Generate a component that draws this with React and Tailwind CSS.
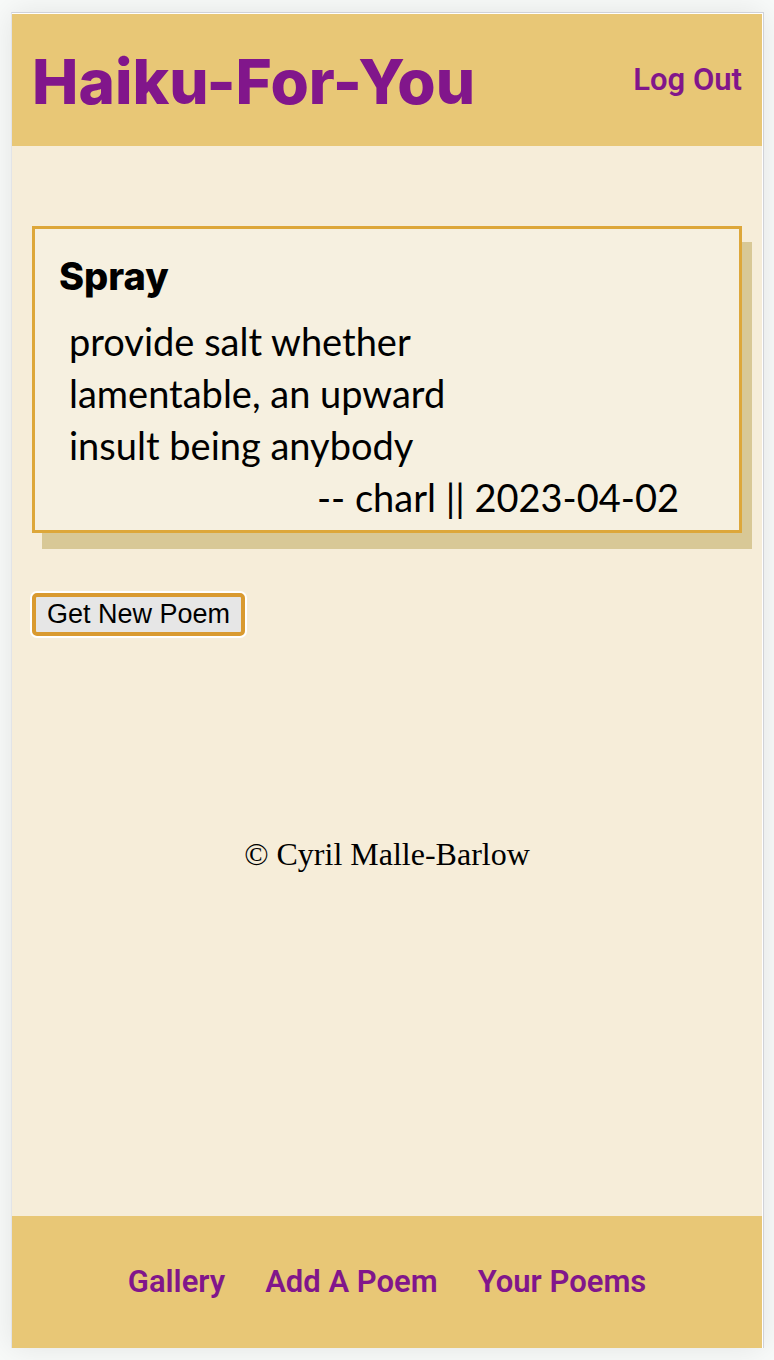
const link = "font-['Roboto',sans-serif] text-[31px] leading-9 font-semibold text-[#81168b] whitespace-nowrap";

export default function App() {
  return (
    <div className="flex min-h-screen flex-col bg-[#f8faf9] pt-3 pr-[10px] pb-3 pl-[11px]">
      <div className="flex grow flex-col border-t border-r border-l border-t-[#d0d2d8] border-r-[#d0d2d8] border-l-[#e2e4e8] bg-white pt-px pr-px shadow-[0_0_30px_rgba(0,20,20,0.09)]">
        <header className="flex h-[132px] items-center justify-between bg-[#e8c776] px-5">
          <h1 className="pt-[3px] font-['Inter',sans-serif] text-[62px] leading-none font-extrabold whitespace-nowrap text-[#81168b]">Haiku-For-You</h1>
          <a href="#logout" className={link}>Log Out</a>
        </header>
        <main className="flex grow flex-col items-start bg-[#f6edd9] px-5 pt-20">
          <article className="w-full border-3 border-[#dda73a] bg-[#f6f0e0] px-6 pt-6 pb-1 shadow-[10px_16px_0_#d8c896]">
            <h2 className="font-['Inter',sans-serif] text-[38px] leading-[46px] font-extrabold text-black">Spray</h2>
            <div className="pt-4 pr-9 pb-[3px] pl-[10px] font-['Lato',sans-serif] text-[38px] leading-[52px] text-black">
              <p>provide salt whether</p>
              <p>lamentable, an upward</p>
              <p>insult being anybody</p>
              <p className="text-right">-- charl || 2023-04-02</p>
            </div>
          </article>
          <button type="button" className="mt-[60px] rounded-[5px] border-4 border-[#d99a30] bg-[#e6e6e6] px-[11px] font-['Liberation_Sans',sans-serif] text-[27px] leading-[35px] text-black shadow-[0_0_0_2px_#ffffff]">Get New Poem</button>
          <p className="mt-[200px] w-full text-center font-['Liberation_Serif',serif] text-[32px] leading-9 text-black">© Cyril Malle-Barlow</p>
        </main>
        <nav className="flex h-[132px] items-center justify-center gap-10 bg-[#e8c776]">
          <a href="#gallery" className={link}>Gallery</a>
          <a href="#add" className={link}>Add A Poem</a>
          <a href="#poems" className={link}>Your Poems</a>
        </nav>
      </div>
    </div>
  );
}
